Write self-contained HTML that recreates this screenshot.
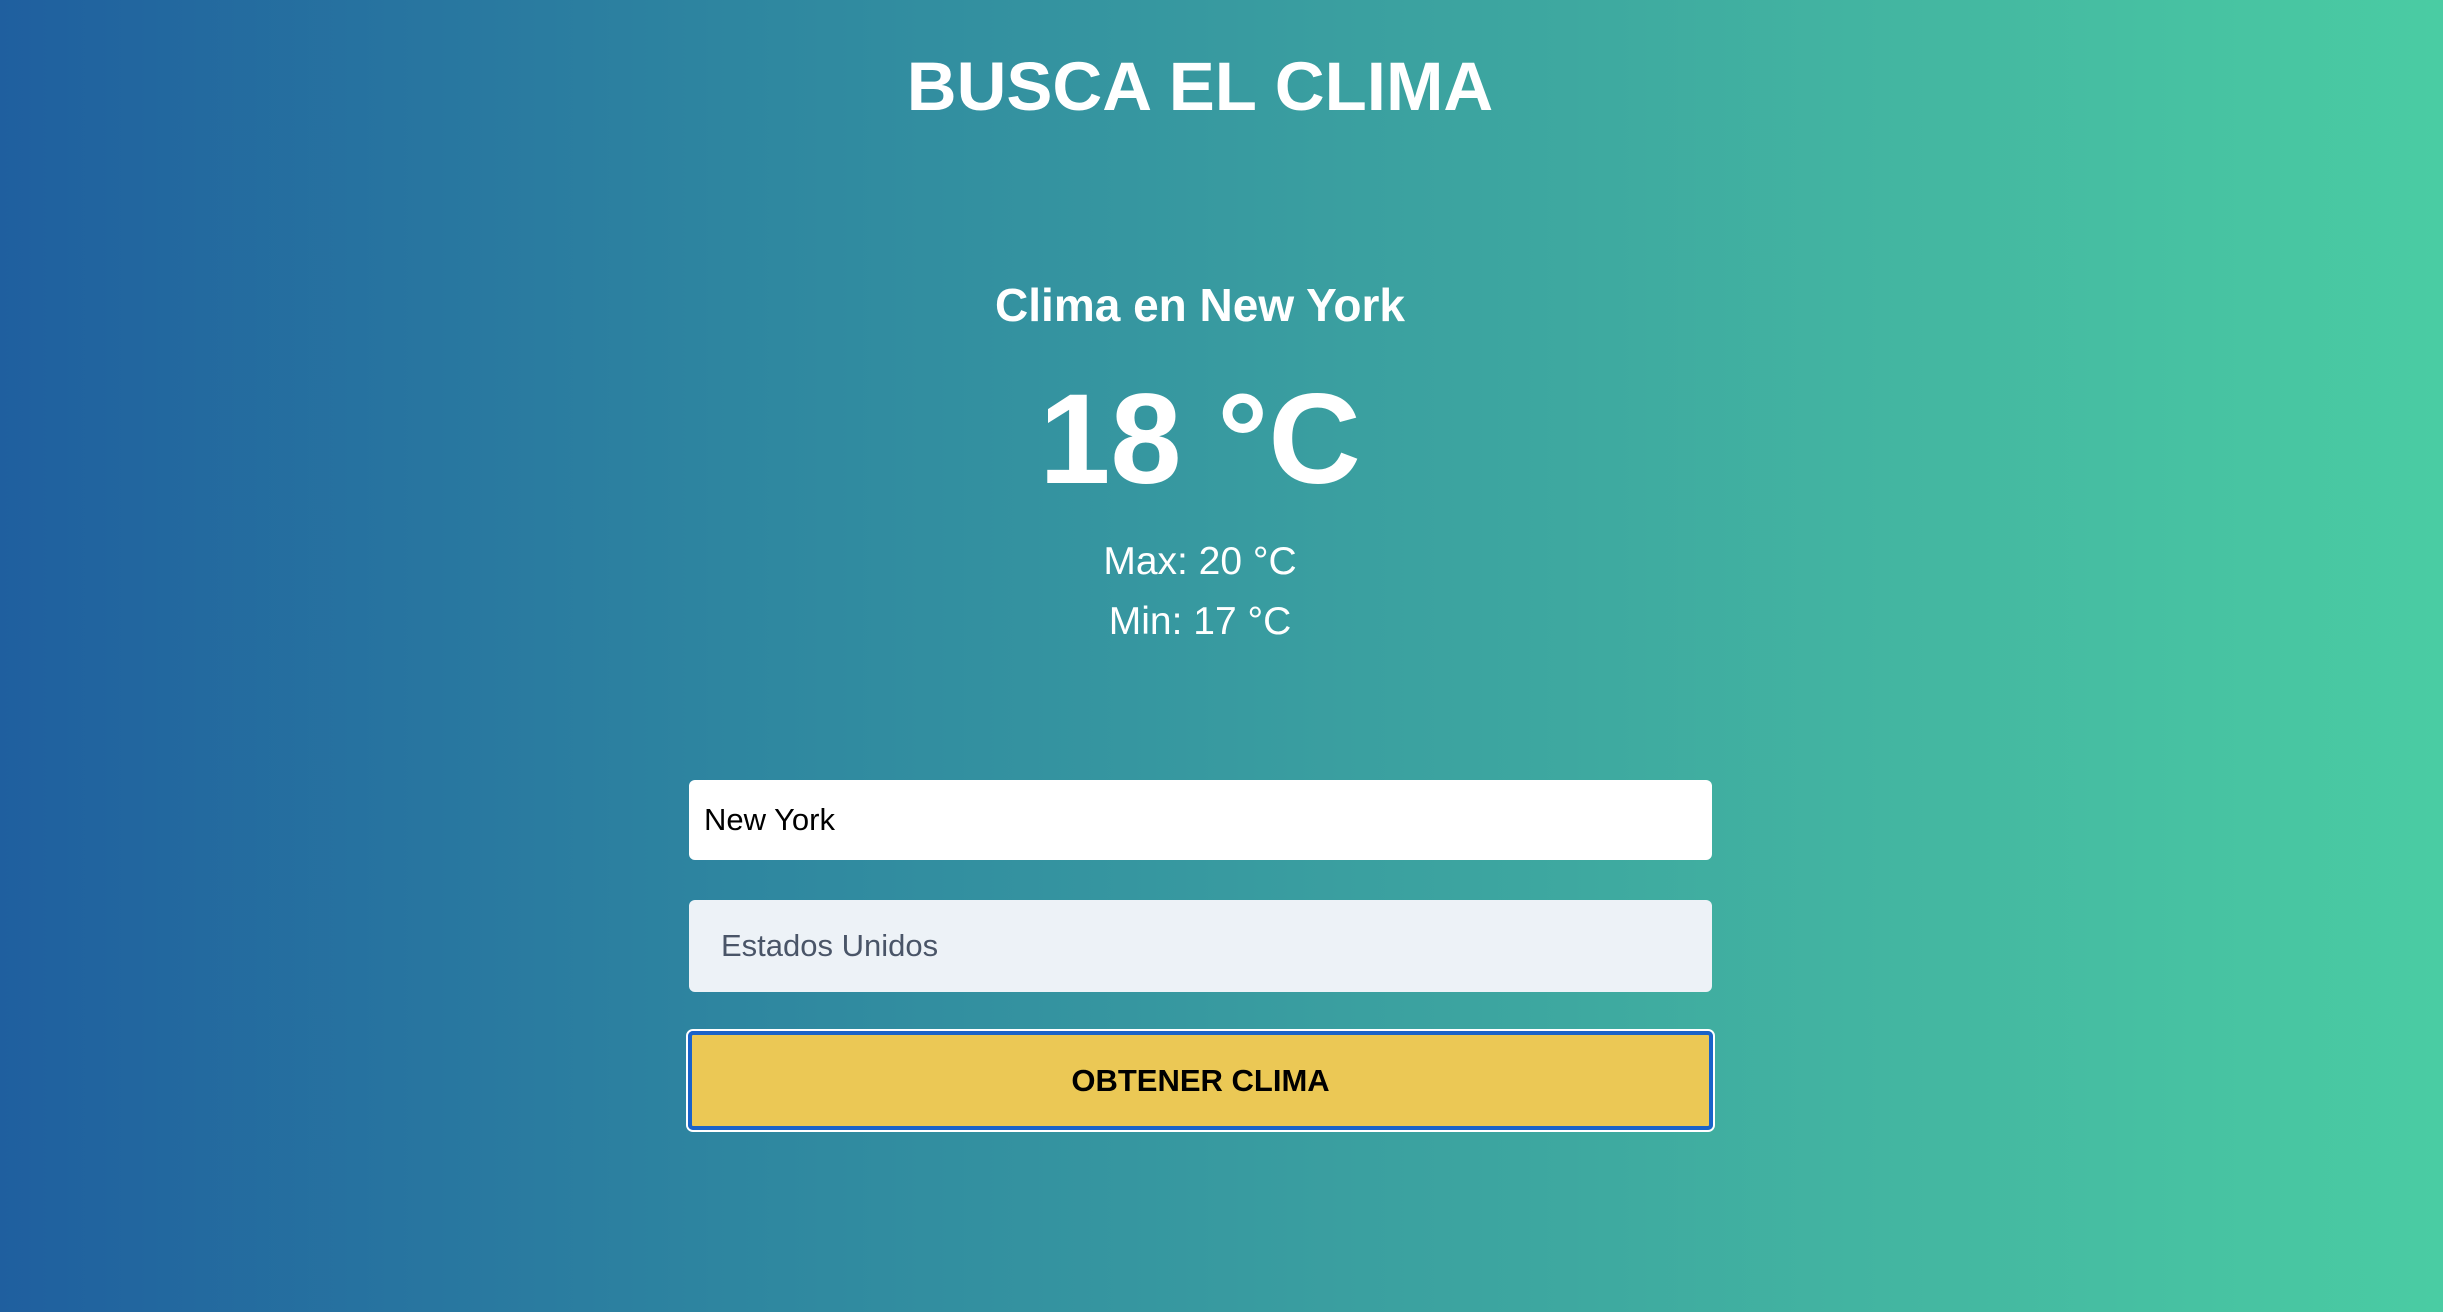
<!DOCTYPE html>
<html><head><meta charset="utf-8"><style>
html,body{margin:0;padding:0}
body{width:2443px;height:1312px;overflow:hidden;position:relative;
background:linear-gradient(90deg,#1f5f9f 0%,#2e86a0 30%,#3a9fa0 55%,#44b8a1 80%,#4acca3 100%);
font-family:"Liberation Sans",sans-serif;color:#fff}
.c{position:absolute;left:0;width:2400px;text-align:center;font-weight:bold;white-space:nowrap}
.in{position:absolute;left:689px;width:1023px;border-radius:6px;box-sizing:border-box}
</style></head><body>
<div class="c" style="top:42px;font-size:69px;line-height:90px">BUSCA EL CLIMA</div>
<div class="c" style="top:275px;font-size:46px;line-height:60px">Clima en New York</div>
<div class="c" style="top:370px;font-size:128px;line-height:140px">18 °C</div>
<div class="c" style="top:537px;font-size:39px;line-height:50px;font-weight:normal">Max: 20 °C</div>
<div class="c" style="top:597px;font-size:39px;line-height:50px;font-weight:normal">Min: 17 °C</div>
<div class="in" style="top:780px;height:80px;background:#fff;color:#000;font-size:31px;line-height:80px;padding-left:15px">New York</div>
<div class="in" style="top:900px;height:92px;background:#edf2f7;color:#4a5568;font-size:31px;line-height:92px;padding-left:32px">Estados Unidos</div>
<div class="in" style="top:1029px;left:686px;width:1029px;height:103px;border:2px solid #fff;border-radius:7px">
<div style="position:absolute;inset:0;border:4px solid #1a63c9;border-radius:5px;background:#ebc855;color:#000;font-size:31px;font-weight:bold;text-align:center;line-height:91px">OBTENER CLIMA</div>
</div>
</body></html>
